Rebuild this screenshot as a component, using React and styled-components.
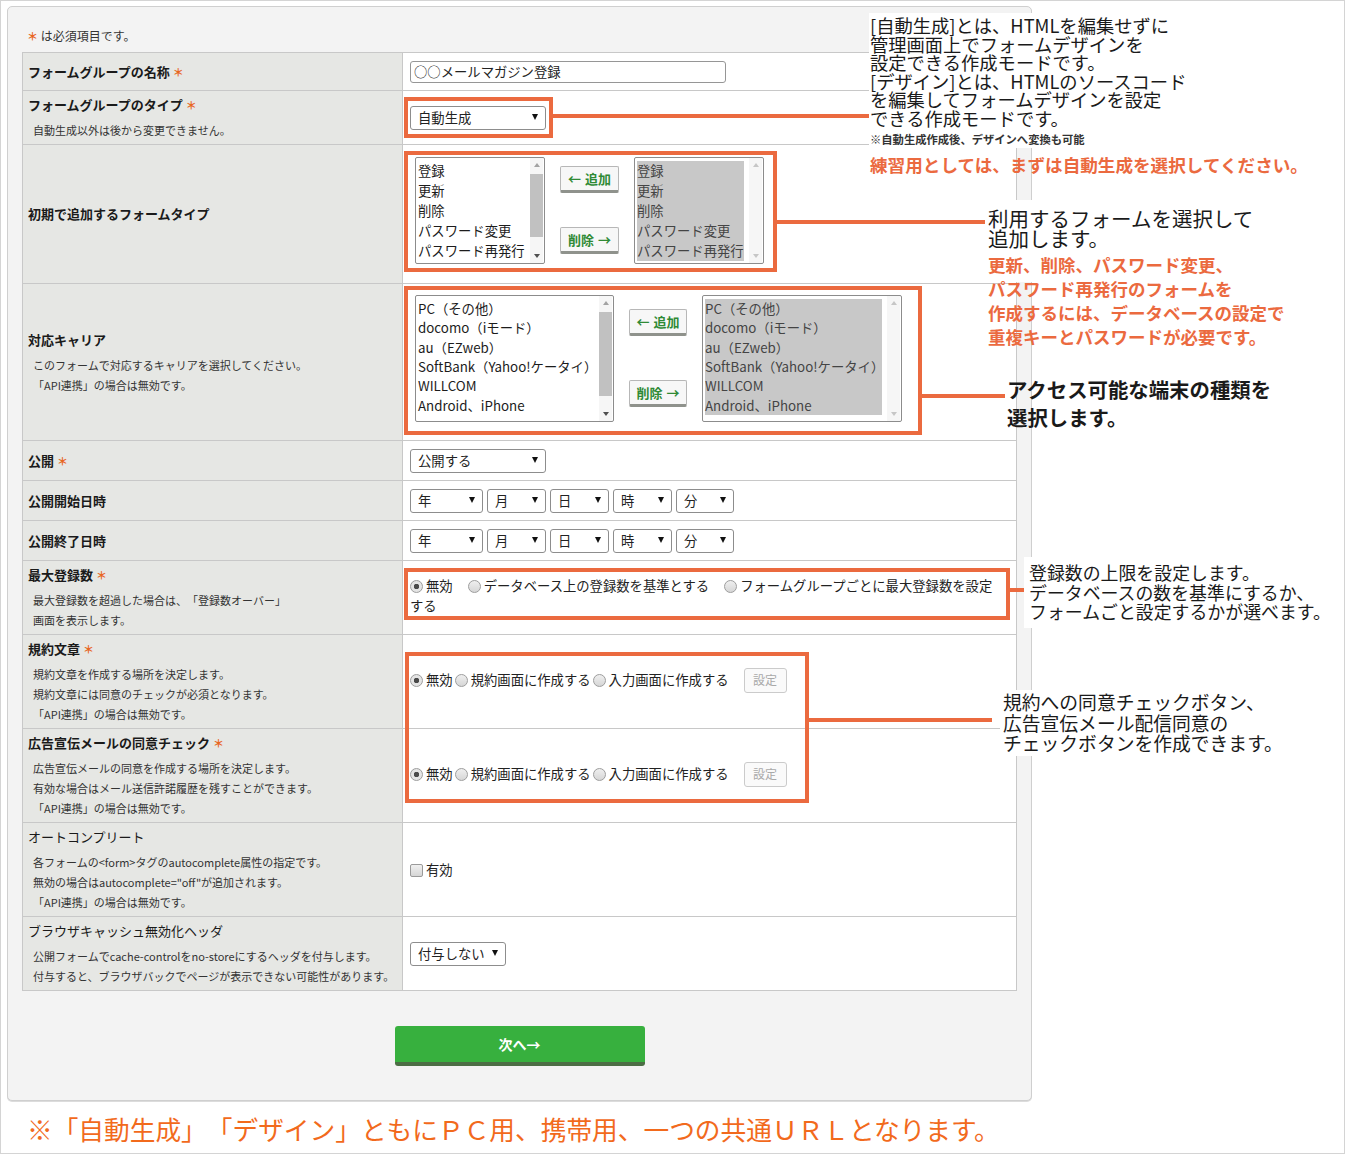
import React from 'react';
import styled, { createGlobalStyle } from 'styled-components';

const ORANGE = '#eb6a3f';
const LINE = '#c8c8c8';
const FONT = '"Noto Sans CJK JP", "Noto Sans", sans-serif';

const GlobalStyle = createGlobalStyle`
  html, body {
    margin: 0;
    padding: 0;
    background: #fff;
  }
  body {
    font-family: ${FONT};
    color: #222;
    text-spacing-trim: space-all;
  }
  *, *::before, *::after {
    box-sizing: border-box;
  }
`;

const Frame = styled.div`
  position: relative;
  width: 1345px;
  height: 1154px;
  border: 1px solid #d4d4d4;
  padding: 5px 0 0 6px;
  overflow: hidden;
`;

const Panel = styled.div`
  width: 1025px;
  background: #f3f3f3;
  border: 1px solid #cfcfcf;
  border-radius: 5px;
  box-shadow: 0 1px 0 #dcdcdc;
  padding: 21px 14px 34px;
`;

const RequiredNote = styled.div`
  margin: 0 0 8px 5px;
  font-size: 12px;
  line-height: 16px;
  color: #333;
`;

const Star = styled.span`
  color: #e8661f;
  font-size: 11px;
  font-weight: 700;
`;

const Table = styled.div`
  width: 995px;
  border-top: 1px solid ${LINE};
  border-left: 1px solid ${LINE};
  background: #fff;
`;

const Row = styled.div`
  display: grid;
  grid-template-columns: 380px 614px;
  height: ${({ $h }) => $h}px;
  border-bottom: 1px solid ${LINE};
`;

const Th = styled.div`
  display: flex;
  flex-direction: column;
  justify-content: center;
  padding: 0 5px;
  background: #e6e7e4;
  border-right: 1px solid ${LINE};
`;

const Label = styled.div`
  font-size: 13px;
  line-height: 20px;
  font-weight: ${({ $plain }) => ($plain ? 400 : 700)};
  color: #1a1a1a;
`;

const Desc = styled.div`
  margin-top: 5px;
  padding-left: 5px;
  font-size: 11px;
  line-height: 20px;
  color: #333;
`;

const Td = styled.div`
  display: flex;
  align-items: center;
  padding: 0 7px;
  border-right: 1px solid ${LINE};
  font-size: 13.33px;
  color: #222;
`;

const TextBox = styled.div`
  width: 316px;
  height: 22px;
  padding-left: 3px;
  border: 1px solid #969696;
  border-radius: 3px;
  background: #fff;
  line-height: 20px;
`;

const SelectBox = styled.div`
  position: relative;
  width: ${({ $w }) => $w}px;
  height: 24px;
  padding-left: 7px;
  border: 1px solid #8d8d8d;
  border-radius: 3px;
  background: #fff;
  line-height: 22px;
  white-space: nowrap;

  &::after {
    content: '';
    position: absolute;
    right: 7px;
    top: 7px;
    border-left: 3px solid transparent;
    border-right: 3px solid transparent;
    border-top: 6px solid #111;
  }
`;

const DateGroup = styled.div`
  display: flex;
  gap: 4px;
`;

const Transfer = styled.div`
  display: flex;
  gap: 15px;
  margin: 0 0 7px 5px;
`;

const ListFrame = styled.div`
  display: flex;
  width: ${({ $w }) => $w}px;
  height: ${({ $h }) => $h}px;
  border: 1px solid #8c8c8c;
  border-radius: 2px;
  background: #fff;
`;

const Options = styled.div`
  flex: 1;
  min-width: 0;
  padding: 3px 5px 0 2px;
  overflow: hidden;
`;

const Option = styled.div`
  height: ${({ $h }) => $h}px;
  line-height: ${({ $h }) => $h}px;
  white-space: nowrap;
  background: ${({ $sel }) => ($sel ? '#c8c8c8' : 'transparent')};
  color: ${({ $sel }) => ($sel ? '#444' : '#1c1c1c')};
`;

const ScrollBar = styled.div`
  display: flex;
  flex-direction: column;
  width: 13px;
  margin-right: 1px;
  background: #f6f6f6;
`;

const ScrollArrow = styled.div`
  display: flex;
  align-items: center;
  justify-content: center;
  height: 14px;

  &::before {
    content: '';
    border-left: 3.5px solid transparent;
    border-right: 3.5px solid transparent;
    ${({ $dir, $c }) =>
      $dir === 'up' ? `border-bottom: 4px solid ${$c};` : `border-top: 4px solid ${$c};`}
  }
`;

const Track = styled.div`
  flex: 1;
  padding-top: 2px;
`;

const Thumb = styled.div`
  height: ${({ $h }) => $h}px;
  background: #c1c1c1;
`;

const MoveButtons = styled.div`
  display: flex;
  flex-direction: column;
  justify-content: space-between;
  padding: ${({ $pt }) => $pt}px 0 ${({ $pb }) => $pb}px;
`;

const MoveButton = styled.div`
  display: flex;
  align-items: center;
  justify-content: center;
  gap: 4px;
  width: ${({ $w }) => $w}px;
  height: 27px;
  border: 1px solid #b7b7b7;
  border-bottom: 3px solid #8f928c;
  border-radius: 2px;
  background: #f7f7f7;
  color: #2f8a35;
  font-size: 13px;
  font-weight: 700;
`;

const RadioGroup = styled.div`
  width: 588px;
  margin-bottom: 3px;
  line-height: 20px;
`;

const RadioLabel = styled.span`
  margin-right: ${({ $gap }) => $gap}px;
  white-space: ${({ $wrap }) => ($wrap ? 'normal' : 'nowrap')};
`;

const Radio = styled.span`
  display: inline-block;
  width: 13px;
  height: 13px;
  margin-right: 3px;
  vertical-align: -2px;
  border: 1px solid #9d9d9d;
  border-radius: 50%;
  background: ${({ $on }) =>
    $on
      ? 'radial-gradient(circle, #4a4a4a 0 2.5px, #e4e4e4 3px)'
      : 'linear-gradient(#efefef, #d6d6d6)'};
`;

const ConsentLine = styled.div`
  display: flex;
  align-items: center;
  margin-bottom: 3px;
  line-height: 20px;
  white-space: nowrap;
`;

const SettingButton = styled.div`
  display: flex;
  align-items: center;
  justify-content: center;
  width: 43px;
  height: 25px;
  margin-left: 13px;
  border: 1px solid #cbcbcb;
  border-radius: 3px;
  background: #fafafa;
  color: #a9a9a9;
  font-size: 12px;
`;

const CheckBox = styled.span`
  display: inline-block;
  width: 13px;
  height: 13px;
  margin-right: 3px;
  vertical-align: -2px;
  border: 1px solid #9a9a9a;
  border-radius: 2px;
  background: linear-gradient(#f0f0f0, #d6d6d6);
`;

const Footer = styled.div`
  display: flex;
  justify-content: center;
  margin-top: 35px;
`;

const NextButton = styled.div`
  display: flex;
  align-items: center;
  justify-content: center;
  width: 250px;
  height: 40px;
  border-radius: 3px;
  border-bottom: 4px solid #4c6d45;
  background: #37b03e;
  color: #fff;
  font-size: 14px;
  font-weight: 700;
`;

const BottomNote = styled.div`
  margin: 13px 0 0 20px;
  font-size: 25.7px;
  line-height: 30px;
  color: #f26a1c;
  white-space: nowrap;
`;

/* annotation layer drawn over the form */
const Overlay = styled.div`
  position: absolute;
  top: -1px;
  left: -1px;
  width: 1345px;
  height: 1154px;
  pointer-events: none;
`;

const Highlight = styled.div`
  position: absolute;
  left: ${({ $x }) => $x}px;
  top: ${({ $y }) => $y}px;
  width: ${({ $w }) => $w}px;
  height: ${({ $h }) => $h}px;
  border: 4px solid ${ORANGE};
`;

const Connector = styled.div`
  position: absolute;
  left: ${({ $x }) => $x}px;
  top: ${({ $y }) => $y - 2}px;
  width: ${({ $w }) => $w}px;
  height: 4px;
  background: ${ORANGE};
`;

const Callout = styled.div`
  position: absolute;
  left: ${({ $x }) => $x}px;
  top: ${({ $y }) => $y}px;
  padding: ${({ $pad }) => $pad || '0'};
  background: ${({ $bg }) => $bg || 'transparent'};
  color: ${({ $orange }) => ($orange ? ORANGE : '#1a1a1a')};
  font-size: ${({ $fs }) => $fs}px;
  line-height: ${({ $lh }) => $lh}px;
  font-weight: ${({ $bold }) => ($bold ? 700 : 400)};
  white-space: nowrap;
`;

const SmallNote = styled.div`
  margin-top: 4px;
  font-size: 11.3px;
  line-height: 14px;
  font-weight: 700;
  color: #333;
`;

function ListBox({ items, width, height, rowH, selected, thumb }) {
  const upColor = selected ? '#c6c6c6' : '#a3a3a3';
  const downColor = selected ? '#c6c6c6' : '#505050';
  return (
    <ListFrame $w={width} $h={height}>
      <Options>
        {items.map((item) => (
          <Option key={item} $h={rowH} $sel={selected}>
            {item}
          </Option>
        ))}
      </Options>
      <ScrollBar>
        <ScrollArrow $dir="up" $c={upColor} />
        <Track>{thumb ? <Thumb $h={thumb} /> : null}</Track>
        <ScrollArrow $dir="down" $c={downColor} />
      </ScrollBar>
    </ListFrame>
  );
}

function DateSelects() {
  return (
    <DateGroup>
      <SelectBox $w={73}>年</SelectBox>
      <SelectBox $w={59}>月</SelectBox>
      <SelectBox $w={59}>日</SelectBox>
      <SelectBox $w={59}>時</SelectBox>
      <SelectBox $w={58}>分</SelectBox>
    </DateGroup>
  );
}

function ConsentRadios() {
  return (
    <ConsentLine>
      <RadioLabel $gap={2}>
        <Radio $on />
        無効
      </RadioLabel>
      <RadioLabel $gap={2}>
        <Radio />
        規約画面に作成する
      </RadioLabel>
      <RadioLabel $gap={2}>
        <Radio />
        入力画面に作成する
      </RadioLabel>
      <SettingButton>設定</SettingButton>
    </ConsentLine>
  );
}

const formTypes = ['登録', '更新', '削除', 'パスワード変更', 'パスワード再発行'];
const carriers = [
  'PC（その他）',
  'docomo（iモード）',
  'au（EZweb）',
  'SoftBank（Yahoo!ケータイ）',
  'WILLCOM',
  'Android、iPhone',
];

export default function App() {
  return (
    <>
      <GlobalStyle />
      <Frame>
        <Panel>
          <RequiredNote>
            <Star>＊</Star> は必須項目です。
          </RequiredNote>
          <Table>
            <Row $h={38}>
              <Th>
                <Label>
                  フォームグループの名称 <Star>＊</Star>
                </Label>
              </Th>
              <Td>
                <TextBox>○○メールマガジン登録</TextBox>
              </Td>
            </Row>
            <Row $h={54}>
              <Th>
                <Label>
                  フォームグループのタイプ <Star>＊</Star>
                </Label>
                <Desc>自動生成以外は後から変更できません。</Desc>
              </Th>
              <Td>
                <SelectBox $w={136}>自動生成</SelectBox>
              </Td>
            </Row>
            <Row $h={139}>
              <Th>
                <Label>初期で追加するフォームタイプ</Label>
              </Th>
              <Td>
                <Transfer>
                  <ListBox items={formTypes} width={130} height={107} rowH={20} thumb={63} />
                  <MoveButtons $pt={9} $pb={10}>
                    <MoveButton $w={59}>
                      <span>←</span>
                      <span>追加</span>
                    </MoveButton>
                    <MoveButton $w={59}>
                      <span>削除</span>
                      <span>→</span>
                    </MoveButton>
                  </MoveButtons>
                  <ListBox items={formTypes} width={130} height={107} rowH={20} selected />
                </Transfer>
              </Td>
            </Row>
            <Row $h={157}>
              <Th>
                <Label>対応キャリア</Label>
                <Desc>
                  このフォームで対応するキャリアを選択してください。
                  <br />
                  「API連携」の場合は無効です。
                </Desc>
              </Th>
              <Td>
                <Transfer>
                  <ListBox items={carriers} width={199} height={127} rowH={19.33} thumb={84} />
                  <MoveButtons $pt={14} $pb={15}>
                    <MoveButton $w={58}>
                      <span>←</span>
                      <span>追加</span>
                    </MoveButton>
                    <MoveButton $w={58}>
                      <span>削除</span>
                      <span>→</span>
                    </MoveButton>
                  </MoveButtons>
                  <ListBox items={carriers} width={200} height={127} rowH={19.33} selected />
                </Transfer>
              </Td>
            </Row>
            <Row $h={40}>
              <Th>
                <Label>
                  公開 <Star>＊</Star>
                </Label>
              </Th>
              <Td>
                <SelectBox $w={136}>公開する</SelectBox>
              </Td>
            </Row>
            <Row $h={40}>
              <Th>
                <Label>公開開始日時</Label>
              </Th>
              <Td>
                <DateSelects />
              </Td>
            </Row>
            <Row $h={40}>
              <Th>
                <Label>公開終了日時</Label>
              </Th>
              <Td>
                <DateSelects />
              </Td>
            </Row>
            <Row $h={74}>
              <Th>
                <Label>
                  最大登録数 <Star>＊</Star>
                </Label>
                <Desc>
                  最大登録数を超過した場合は、「登録数オーバー」
                  <br />
                  画面を表示します。
                </Desc>
              </Th>
              <Td>
                <RadioGroup>
                  <RadioLabel $gap={15}>
                    <Radio $on />
                    無効
                  </RadioLabel>
                  <RadioLabel $gap={15}>
                    <Radio />
                    データベース上の登録数を基準とする
                  </RadioLabel>
                  <RadioLabel $gap={0} $wrap>
                    <Radio />
                    フォームグループごとに最大登録数を設定する
                  </RadioLabel>
                </RadioGroup>
              </Td>
            </Row>
            <Row $h={94}>
              <Th>
                <Label>
                  規約文章 <Star>＊</Star>
                </Label>
                <Desc>
                  規約文章を作成する場所を決定します。
                  <br />
                  規約文章には同意のチェックが必須となります。
                  <br />
                  「API連携」の場合は無効です。
                </Desc>
              </Th>
              <Td>
                <ConsentRadios />
              </Td>
            </Row>
            <Row $h={94}>
              <Th>
                <Label>
                  広告宣伝メールの同意チェック <Star>＊</Star>
                </Label>
                <Desc>
                  広告宣伝メールの同意を作成する場所を決定します。
                  <br />
                  有効な場合はメール送信許諾履歴を残すことができます。
                  <br />
                  「API連携」の場合は無効です。
                </Desc>
              </Th>
              <Td>
                <ConsentRadios />
              </Td>
            </Row>
            <Row $h={94}>
              <Th>
                <Label $plain>オートコンプリート</Label>
                <Desc>
                  各フォームの&lt;form&gt;タグのautocomplete属性の指定です。
                  <br />
                  無効の場合はautocomplete="off"が追加されます。
                  <br />
                  「API連携」の場合は無効です。
                </Desc>
              </Th>
              <Td>
                <span>
                  <CheckBox />
                  有効
                </span>
              </Td>
            </Row>
            <Row $h={74}>
              <Th>
                <Label $plain>ブラウザキャッシュ無効化ヘッダ</Label>
                <Desc>
                  公開フォームでcache-controlをno-storeにするヘッダを付与します。
                  <br />
                  付与すると、ブラウザバックでページが表示できない可能性があります。
                </Desc>
              </Th>
              <Td>
                <SelectBox $w={96}>付与しない</SelectBox>
              </Td>
            </Row>
          </Table>
          <Footer>
            <NextButton>次へ→</NextButton>
          </Footer>
        </Panel>
        <BottomNote>※「自動生成」「デザイン」ともにＰＣ用、携帯用、一つの共通ＵＲＬとなります。</BottomNote>

        <Overlay>
          <Highlight $x={404} $y={97} $w={149} $h={41} />
          <Highlight $x={404} $y={151} $w={373} $h={121} />
          <Highlight $x={404} $y={286} $w={518} $h={149} />
          <Highlight $x={404} $y={568} $w={606} $h={52} />
          <Highlight $x={405} $y={652} $w={404} $h={151} />

          <Connector $x={552} $y={116} $w={317} />
          <Connector $x={776} $y={222} $w={209} />
          <Connector $x={921} $y={396} $w={84} />
          <Connector $x={1009} $y={590} $w={16} />
          <Connector $x={808} $y={720} $w={184} />

          <Callout $x={869} $y={13} $fs={18.3} $lh={18.6} $bg="#fff" $pad="3px 20px 2px 1px">
            [自動生成]とは、HTMLを編集せずに
            <br />
            管理画面上でフォームデザインを
            <br />
            設定できる作成モードです。
            <br />
            [デザイン]とは、HTMLのソースコード
            <br />
            を編集してフォームデザインを設定
            <br />
            できる作成モードです。
            <SmallNote>※自動生成作成後、デザインへ変換も可能</SmallNote>
          </Callout>
          <Callout $x={870} $y={154} $fs={17.6} $lh={22} $bold $orange>
            練習用としては、まずは自動生成を選択してください。
          </Callout>

          <Callout $x={985} $y={200} $fs={20.5} $lh={20} $bg="#fff" $pad="8px 6px 34px 3px">
            利用するフォームを選択して
            <br />
            追加します。
          </Callout>
          <Callout $x={988} $y={253} $fs={17.5} $lh={24} $bold $orange>
            更新、削除、パスワード変更、
            <br />
            パスワード再発行のフォームを
            <br />
            作成するには、データベースの設定で
            <br />
            重複キーとパスワードが必要です。
          </Callout>

          <Callout $x={1007} $y={375} $fs={20.4} $lh={28} $bold>
            アクセス可能な端末の種類を
            <br />
            選択します。
          </Callout>

          <Callout $x={1024} $y={557} $fs={17.9} $lh={19.5} $bg="#fff" $pad="6px 10px 6px 5px">
            登録数の上限を設定します。
            <br />
            データベースの数を基準にするか、
            <br />
            フォームごと設定するかが選べます。
          </Callout>

          <Callout $x={1000} $y={690} $fs={18.8} $lh={20.5} $bg="#fff" $pad="2px 10px 2px 3px">
            規約への同意チェックボタン、
            <br />
            広告宣伝メール配信同意の
            <br />
            チェックボタンを作成できます。
          </Callout>
        </Overlay>
      </Frame>
    </>
  );
}
